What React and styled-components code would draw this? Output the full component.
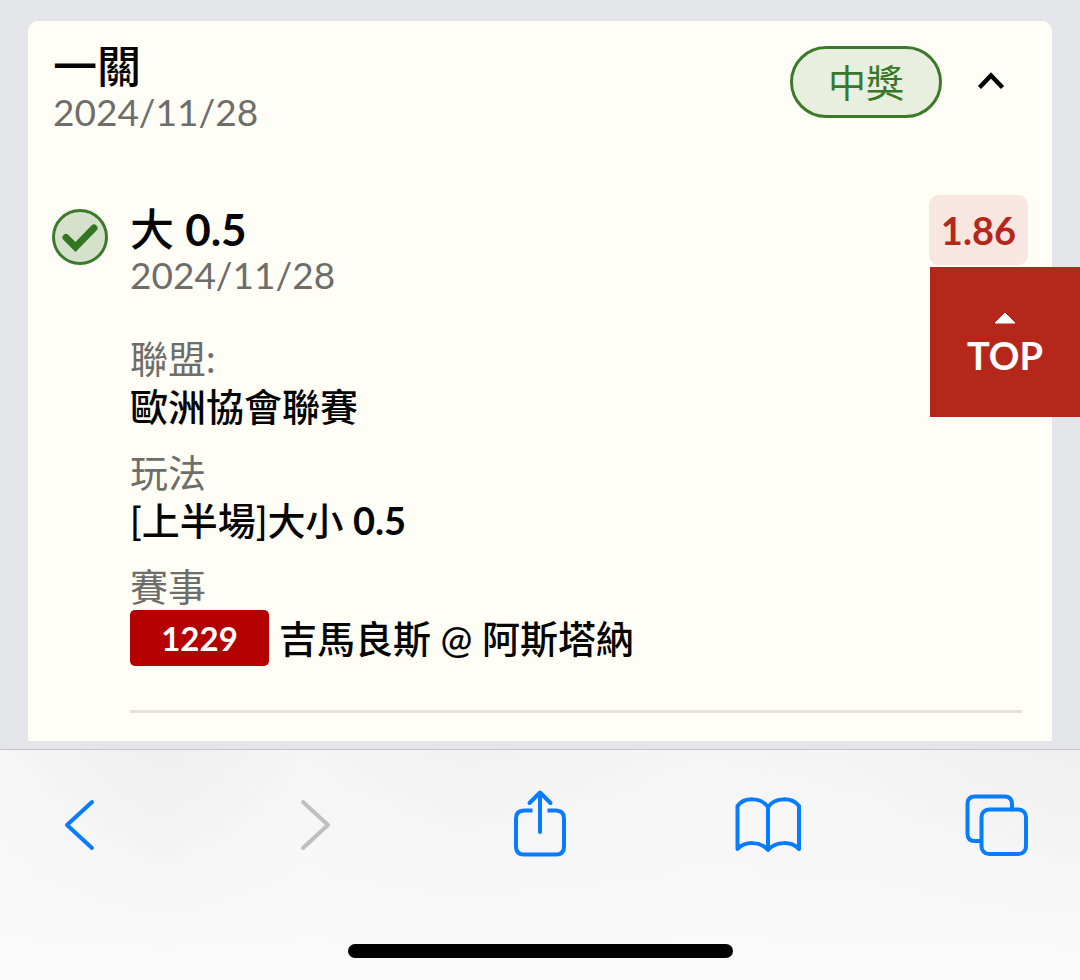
import React, { useState } from "react";
import styled, { createGlobalStyle } from "styled-components";

const GlobalStyle = createGlobalStyle`
  *, *::before, *::after { box-sizing: border-box; }
  body {
    margin: 0;
    background: #e4e5e8;
    color: #050505;
    font-family: Lato, "Noto Sans CJK TC", sans-serif;
  }
  h1, h2, p, dl, dt, dd { margin: 0; }
  button {
    margin: 0;
    padding: 0;
    border: 0;
    background: none;
    color: inherit;
    font: inherit;
    cursor: pointer;
  }
`;

const Screen = styled.div`
  position: relative;
  display: flex;
  flex-direction: column;
  gap: 8px;
  min-height: 100vh;
  padding-top: 21px;
`;

const Card = styled.main`
  margin: 0 28px;
  padding: 22px 24px 28px;
  border-radius: 10px 10px 0 0;
  background: #fffef6;
`;

const CardHeader = styled.header`
  display: flex;
  align-items: flex-start;
  justify-content: space-between;
  margin-bottom: 60px;
  padding: 0 12px 0 1px;
`;

const Title = styled.h1`
  font-size: 44px;
  font-weight: 500;
  line-height: 46px;
`;

const EntryTitle = styled(Title).attrs({ as: "h2" })``;

const Figure = styled.b`
  font-weight: 700;
`;

const DateText = styled.p`
  color: #6d6d6a;
  font-size: 37px;
  line-height: 46px;
`;

const HeaderActions = styled.div`
  display: flex;
  align-items: center;
  gap: 24px;
  padding-top: 3px;
`;

const ResultPill = styled.span`
  padding: 1px 35px 0;
  border: 3px solid #3b7a2b;
  border-radius: 36px;
  background: #e9efdf;
  color: #37782a;
  font-size: 38px;
  line-height: 65px;
`;

const CollapseButton = styled.button`
  display: flex;
  width: 50px;
  height: 50px;

  svg { transform: ${(p) => (p.$open ? "none" : "rotate(180deg)")}; }
`;

const Entry = styled.article`
  display: grid;
  grid-template-columns: 56px 1fr;
  column-gap: 22px;
`;

const StatusIcon = styled.svg`
  width: 56px;
  height: 56px;
  margin-top: 14px;
`;

const EntryHead = styled.div`
  display: flex;
  align-items: flex-start;
  justify-content: space-between;
  margin-bottom: 36px;
`;

const EntryName = styled.div`
  padding-top: 11px;
`;

const Odds = styled.strong`
  padding: 0 12px;
  border-radius: 10px;
  background: #f7e7e0;
  color: #b5261c;
  font-size: 38px;
  line-height: 70px;
`;

const Details = styled.dl`
  display: flex;
  flex-direction: column;
  gap: 18px;
  margin-right: 6px;
  padding-bottom: 44px;
  border-bottom: 3px solid #e3e2dd;
  font-size: 38px;
  line-height: 48px;
`;

const Label = styled.dt`
  color: #6d6d6a;
`;

const Value = styled.dd`
  display: flex;
  align-items: center;
  gap: 10px;
  font-weight: 500;
`;

const MatchCode = styled.span`
  min-width: 139px;
  border-radius: 5px;
  background: #b40000;
  color: #fff;
  font-size: 33px;
  font-weight: 700;
  line-height: 56px;
  text-align: center;
`;

const TopButton = styled.button`
  position: absolute;
  top: 267px;
  right: 0;
  display: flex;
  flex-direction: column;
  align-items: center;
  justify-content: center;
  gap: 8px;
  width: 150px;
  height: 150px;
  padding-top: 6px;
  background: #b5261b;
  color: #fff;
  font-size: 38px;
  font-weight: 700;
  line-height: 46px;
`;

const BrowserBar = styled.footer`
  display: flex;
  flex: 1;
  flex-direction: column;
  align-items: center;
  justify-content: space-between;
  padding: 35px 0 22px;
  border-top: 1px solid #c4c6c7;
  background:
    linear-gradient(to bottom, rgba(250, 250, 250, 0), #fafafa 90%),
    linear-gradient(to right, #f6f6f6, #efefef 15%, #f5f5f5 28%, #f2f2f2 43%, #f5f5f5 65%, #f4f4f4 80%, #efefef);
`;

const BrowserNav = styled.nav`
  display: flex;
  justify-content: space-between;
  width: 100%;
  padding: 0 43px 0 40px;
`;

const NavButton = styled.button`
  display: flex;
  color: #087cff;

  &:disabled { color: #bfbfbf; }
`;

const NavIcon = styled.svg`
  width: 80px;
  height: 80px;
  fill: none;
  stroke: currentColor;
  stroke-width: 4;
  stroke-linecap: round;
  stroke-linejoin: round;
`;

const HomeIndicator = styled.div`
  width: 385px;
  max-width: 60%;
  height: 14px;
  border-radius: 7px;
  background: #000;
`;

const browserActions = [
  { label: "上一頁", icon: <path d="M52 17 27 40l25 23" /> },
  { label: "下一頁", disabled: true, icon: <path d="M34 17l25 23-25 23" /> },
  {
    label: "分享",
    icon: (
      <>
        <path d="M41 47V8M30.500 18 41 7.500 51.500 18" />
        <path
          strokeLinecap="butt"
          d="M33.500 25.500H25q-8 0-8 8V61.500q0 8 8 8h32q8 0 8-8V33.500q0-8-8-8h-8.500"
        />
      </>
    ),
  },
  {
    label: "書籤",
    icon: (
      <path d="M40 22C33 12 16 12 9.500 21V64C17 56 32 56 40 65 48 56 63 56 71 64V21C64 12 47 12 40 22ZV64" />
    ),
  },
  {
    label: "分頁",
    icon: (
      <>
        <path d="M24 56H18q-7.500 0-7.500-7.500V19q0-7.500 7.500-7.500h29.500q7.500 0 7.500 7.500v5.500" />
        <rect x="24.500" y="24.500" width="44.500" height="44.500" rx="7.500" />
      </>
    ),
  },
];

export default function App() {
  const [open, setOpen] = useState(true);

  return (
    <>
      <GlobalStyle />
      <Screen>
        <Card>
          <CardHeader>
            <div>
              <Title>一關</Title>
              <DateText>2024/11/28</DateText>
            </div>
            <HeaderActions>
              <ResultPill>中獎</ResultPill>
              <CollapseButton
                aria-label="收合"
                aria-expanded={open}
                $open={open}
                onClick={() => setOpen(!open)}
              >
                <svg width="50" height="50" viewBox="0 0 50 50" aria-hidden="true">
                  <path d="M13.500 30.500 25 18.500 36.500 30.500" fill="none" stroke="#000" strokeWidth="4.500" />
                </svg>
              </CollapseButton>
            </HeaderActions>
          </CardHeader>

          {open && (
            <Entry>
              <StatusIcon viewBox="0 0 56 56" aria-hidden="true">
                <circle cx="28" cy="28" r="26.500" fill="#d5e1cb" stroke="#3b7a2b" strokeWidth="3" />
                <path
                  d="M14 28.500 23.500 38 42 19"
                  fill="none"
                  stroke="#32771f"
                  strokeWidth="7"
                  strokeLinecap="round"
                />
              </StatusIcon>
              <div>
                <EntryHead>
                  <EntryName>
                    <EntryTitle>大 <Figure>0.5</Figure></EntryTitle>
                    <DateText>2024/11/28</DateText>
                  </EntryName>
                  <Odds>1.86</Odds>
                </EntryHead>
                <Details>
                  <div>
                    <Label>聯盟:</Label>
                    <Value>歐洲協會聯賽</Value>
                  </div>
                  <div>
                    <Label>玩法</Label>
                    <Value>
                      <span>[上半場]大小 <Figure>0.5</Figure></span>
                    </Value>
                  </div>
                  <div>
                    <Label>賽事</Label>
                    <Value>
                      <MatchCode>1229</MatchCode>
                      <span>吉馬良斯 @ 阿斯塔納</span>
                    </Value>
                  </div>
                </Details>
              </div>
            </Entry>
          )}
        </Card>

        <TopButton onClick={() => window.scrollTo({ top: 0 })}>
          <svg width="22" height="12" viewBox="0 0 22 12" aria-hidden="true">
            <path d="M1 11 11 1 21 11Z" fill="#fff" stroke="#fff" strokeLinejoin="round" />
          </svg>
          TOP
        </TopButton>

        <BrowserBar>
          <BrowserNav>
            {browserActions.map(({ label, disabled, icon }) => (
              <NavButton key={label} aria-label={label} disabled={disabled}>
                <NavIcon viewBox="0 0 80 80" aria-hidden="true">{icon}</NavIcon>
              </NavButton>
            ))}
          </BrowserNav>
          <HomeIndicator />
        </BrowserBar>
      </Screen>
    </>
  );
}
